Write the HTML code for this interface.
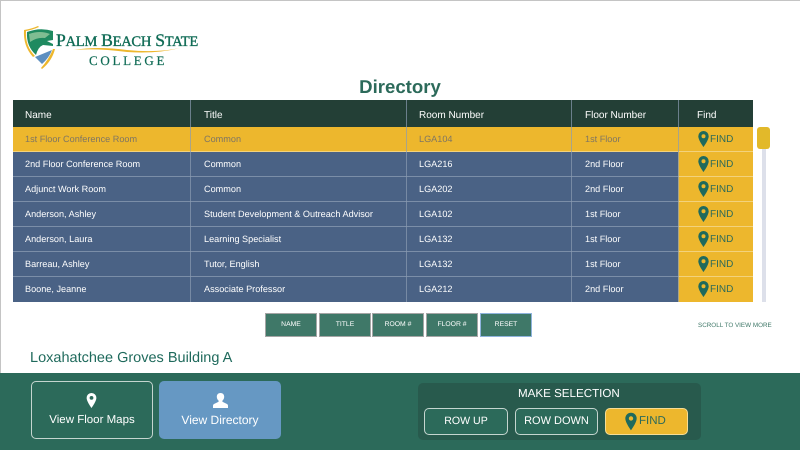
<!DOCTYPE html>
<html><head><meta charset="utf-8"><style>
*{box-sizing:border-box}
html,body{margin:0;padding:0}
body{width:800px;height:450px;position:relative;overflow:hidden;background:#fff;font-family:"Liberation Sans",sans-serif;text-rendering:geometricPrecision}
.a{position:absolute}
.t{position:absolute;white-space:nowrap}
.h{position:absolute;white-space:nowrap;top:100px;color:#fff;font-size:10px;line-height:31px}
.r{position:absolute;left:13px;width:665px;height:25px;background:#4a6285;border-bottom:1px solid #7b8ea8;color:#fff;font-size:9.15px;line-height:25px}
.r span{position:absolute;white-space:nowrap}
.c1{left:12px}.c2{left:191px}.c3{left:406px}.c4{left:572px}
.v{position:absolute;top:100px;width:1px;height:202px;background:#8a9bb0;opacity:.7}
.f{position:absolute;left:678px;width:75px;height:25px;background:#edb72d;border-bottom:1px solid #f3d27c;color:#2c6a5a;font-size:10px;line-height:25px}
.f svg{position:absolute;left:20px;top:4px}
.f span{position:absolute;left:32px;top:0}
.b{position:absolute;top:313px;height:24px;background:#3f7868;border:1px solid #a5a5a5;color:#fff;font-size:6.8px;line-height:22px;text-align:center}
.s{position:absolute;border:1px solid #c5d5cf;border-radius:5px;color:#fff;font-size:11.5px;text-align:center}
</style></head><body>
<div class="a" style="left:0;top:0;width:800px;height:1px;background:#c4c4c4"></div>
<div class="a" style="left:0;top:0;width:1px;height:373px;background:#c4c4c4"></div>

<svg class="a" style="left:22px;top:26px" width="34" height="44" viewBox="0 0 34 44">
<path d="M2 4 Q9 3 16 0 L17 1 Q10 4 4 5 Q3 20 13 30 L11 31 Q1 20 2 4Z" fill="#edb72d"/>
<path d="M5 6 Q18 1 31 5 L31 14 L25 15 L31 18 L31 20 L21 19 Q16 21 14 29 Q4 20 5 6Z" fill="#1f8a60"/>
<path d="M7 8 Q18 4 28 8 L23 12 Q15 11 8 16Z" fill="#7fbd92"/>
<path d="M13 31 L30 24 Q27 32 20 38 Z" fill="#5e8fc0"/>
<path d="M31 23 L33 23 Q30 35 20 43 L19 42 Q27 33 31 23Z" fill="#edb72d"/>
</svg>
<div class="t" style="left:56px;top:30px;font:17.6px/20px 'Liberation Serif',serif;color:#0f6b55;letter-spacing:-.3px;-webkit-text-stroke:.35px #0f6b55">P<span style="font-size:14.6px">ALM</span> B<span style="font-size:14.6px">EACH</span> S<span style="font-size:14.6px">TATE</span></div>
<svg class="a" style="left:72px;top:46px" width="110" height="8" viewBox="0 0 110 8"><path d="M2 4 Q25 0 55 4 Q85 7 108 2 Q85 8 55 6 Q25 2 2 4Z" fill="#edb72d"/></svg>
<div class="t" style="left:89px;top:52px;font:13px/17px 'Liberation Serif',serif;color:#0f6b55;letter-spacing:2.7px;-webkit-text-stroke:.2px #0f6b55">COLLEGE</div>

<div class="t" style="left:0;width:800px;top:75px;text-align:center;font:bold 18.6px/23px 'Liberation Sans',sans-serif;color:#2c6a5a">Directory</div>

<div class="a" style="left:13px;top:100px;width:740px;height:27px;background:#233f36"></div>
<div class="h" style="left:25px">Name</div>
<div class="h" style="left:204px">Title</div>
<div class="h" style="left:419px">Room Number</div>
<div class="h" style="left:585px">Floor Number</div>
<div class="h" style="left:697px">Find</div>

<div class="r" style="top:127px;background:#edb72d;border-color:#f3d27c;color:#7e7563"><span class="c1">1st Floor Conference Room</span><span class="c2">Common</span><span class="c3">LGA104</span><span class="c4">1st Floor</span></div>
<div class="r" style="top:152px"><span class="c1">2nd Floor Conference Room</span><span class="c2">Common</span><span class="c3">LGA216</span><span class="c4">2nd Floor</span></div>
<div class="r" style="top:177px"><span class="c1">Adjunct Work Room</span><span class="c2">Common</span><span class="c3">LGA202</span><span class="c4">2nd Floor</span></div>
<div class="r" style="top:202px"><span class="c1">Anderson, Ashley</span><span class="c2">Student Development &amp; Outreach Advisor</span><span class="c3">LGA102</span><span class="c4">1st Floor</span></div>
<div class="r" style="top:227px"><span class="c1">Anderson, Laura</span><span class="c2">Learning Specialist</span><span class="c3">LGA132</span><span class="c4">1st Floor</span></div>
<div class="r" style="top:252px"><span class="c1">Barreau, Ashley</span><span class="c2">Tutor, English</span><span class="c3">LGA132</span><span class="c4">1st Floor</span></div>
<div class="r" style="top:277px;border-bottom:0"><span class="c1">Boone, Jeanne</span><span class="c2">Associate Professor</span><span class="c3">LGA212</span><span class="c4">2nd Floor</span></div>

<div class="f" style="top:127px"><svg width="11" height="16" viewBox="0 0 11 16"><path fill-rule="evenodd" d="M5.5 0A5.2 5.2 0 0 0 .3 5.2C.3 9 5.5 16 5.5 16S10.7 9 10.7 5.2A5.2 5.2 0 0 0 5.5 0ZM5.5 3.2a2 2 0 1 1 0 4 2 2 0 0 1 0-4Z" fill="#1f6a5c"/></svg><span>FIND</span></div>
<div class="f" style="top:152px"><svg width="11" height="16" viewBox="0 0 11 16"><path fill-rule="evenodd" d="M5.5 0A5.2 5.2 0 0 0 .3 5.2C.3 9 5.5 16 5.5 16S10.7 9 10.7 5.2A5.2 5.2 0 0 0 5.5 0ZM5.5 3.2a2 2 0 1 1 0 4 2 2 0 0 1 0-4Z" fill="#1f6a5c"/></svg><span>FIND</span></div>
<div class="f" style="top:177px"><svg width="11" height="16" viewBox="0 0 11 16"><path fill-rule="evenodd" d="M5.5 0A5.2 5.2 0 0 0 .3 5.2C.3 9 5.5 16 5.5 16S10.7 9 10.7 5.2A5.2 5.2 0 0 0 5.5 0ZM5.5 3.2a2 2 0 1 1 0 4 2 2 0 0 1 0-4Z" fill="#1f6a5c"/></svg><span>FIND</span></div>
<div class="f" style="top:202px"><svg width="11" height="16" viewBox="0 0 11 16"><path fill-rule="evenodd" d="M5.5 0A5.2 5.2 0 0 0 .3 5.2C.3 9 5.5 16 5.5 16S10.7 9 10.7 5.2A5.2 5.2 0 0 0 5.5 0ZM5.5 3.2a2 2 0 1 1 0 4 2 2 0 0 1 0-4Z" fill="#1f6a5c"/></svg><span>FIND</span></div>
<div class="f" style="top:227px"><svg width="11" height="16" viewBox="0 0 11 16"><path fill-rule="evenodd" d="M5.5 0A5.2 5.2 0 0 0 .3 5.2C.3 9 5.5 16 5.5 16S10.7 9 10.7 5.2A5.2 5.2 0 0 0 5.5 0ZM5.5 3.2a2 2 0 1 1 0 4 2 2 0 0 1 0-4Z" fill="#1f6a5c"/></svg><span>FIND</span></div>
<div class="f" style="top:252px"><svg width="11" height="16" viewBox="0 0 11 16"><path fill-rule="evenodd" d="M5.5 0A5.2 5.2 0 0 0 .3 5.2C.3 9 5.5 16 5.5 16S10.7 9 10.7 5.2A5.2 5.2 0 0 0 5.5 0ZM5.5 3.2a2 2 0 1 1 0 4 2 2 0 0 1 0-4Z" fill="#1f6a5c"/></svg><span>FIND</span></div>
<div class="f" style="top:277px;border-bottom:0"><svg width="11" height="16" viewBox="0 0 11 16"><path fill-rule="evenodd" d="M5.5 0A5.2 5.2 0 0 0 .3 5.2C.3 9 5.5 16 5.5 16S10.7 9 10.7 5.2A5.2 5.2 0 0 0 5.5 0ZM5.5 3.2a2 2 0 1 1 0 4 2 2 0 0 1 0-4Z" fill="#1f6a5c"/></svg><span>FIND</span></div>

<div class="v" style="left:190px"></div>
<div class="v" style="left:406px"></div>
<div class="v" style="left:571px"></div>
<div class="v" style="left:678px"></div>

<div class="a" style="left:762px;top:145px;width:4px;height:157px;background:#dde0ea"></div>
<div class="a" style="left:757px;top:127px;width:13px;height:22px;background:#e2b92a;border-radius:3px"></div>

<div class="b" style="left:265px;width:52px">NAME</div>
<div class="b" style="left:319px;width:52px">TITLE</div>
<div class="b" style="left:372px;width:52px">ROOM #</div>
<div class="b" style="left:426px;width:52px">FLOOR #</div>
<div class="b" style="left:480px;width:52px;border:1px solid #8fb3dd">RESET</div>

<div class="t" style="left:698px;top:320px;font-size:6.3px;line-height:11px;color:#3f7868">SCROLL TO VIEW MORE</div>

<div class="t" style="left:30px;top:348px;font-size:14.5px;line-height:20px;color:#1f6a5c">Loxahatchee Groves Building A</div>

<div class="a" style="left:0;top:373px;width:800px;height:77px;background:#2c6a5a"></div>

<div class="s" style="left:31px;top:381px;width:122px;height:58px;background:#2c6a5a"></div>
<svg class="a" style="left:86px;top:393px" width="11" height="15" viewBox="0 0 11 16"><path fill-rule="evenodd" d="M5.5 0A5.2 5.2 0 0 0 .3 5.2C.3 9 5.5 16 5.5 16S10.7 9 10.7 5.2A5.2 5.2 0 0 0 5.5 0ZM5.5 3.2a2 2 0 1 1 0 4 2 2 0 0 1 0-4Z" fill="#fff"/></svg>
<div class="t" style="left:31px;width:122px;top:412px;text-align:center;color:#fff;font-size:11.5px;line-height:16px">View Floor Maps</div>

<div class="a" style="left:159px;top:381px;width:122px;height:58px;background:#6698c3;border-radius:5px"></div>
<svg class="a" style="left:213px;top:393px" width="15" height="15" viewBox="0 0 15 15"><path d="M7.5 0C5.2 0 3.800 1.500 3.800 3.800c0 1.600.7 3 1.800 3.800v1.100L1 11c-.7.4-1 1-1 1.700V15h15v-2.300c0-.7-.3-1.300-1-1.700L9.400 8.700V7.600c1.100-.8 1.800-2.200 1.800-3.800C11.200 1.500 9.800 0 7.500 0Z" fill="#fff"/></svg>
<div class="t" style="left:159px;width:122px;top:412px;text-align:center;color:#fff;font-size:12px;line-height:16px">View Directory</div>

<div class="a" style="left:418px;top:383px;width:283px;height:57px;background:#285a4d;border-radius:5px"></div>
<div class="t" style="left:518px;top:385px;color:#fff;font-size:11.6px;line-height:17px">MAKE SELECTION</div>
<div class="s" style="left:424px;top:408px;width:84px;height:27px;line-height:25px;background:#2c6a5a;font-size:10.6px">ROW UP</div>
<div class="s" style="left:515px;top:408px;width:83px;height:27px;line-height:24px;background:#2c6a5a;font-size:11px">ROW DOWN</div>
<div class="s" style="left:605px;top:408px;width:83px;height:27px;background:#edb72d;border-color:#f7dc94"></div>
<svg class="a" style="left:625px;top:412px" width="12" height="19" viewBox="0 0 11 16"><path fill-rule="evenodd" d="M5.5 0A5.200 5.200 0 0 0 .3 5.200C.3 9 5.500 16 5.500 16S10.700 9 10.700 5.200A5.200 5.200 0 0 0 5.500 0ZM5.500 3.200a2 2 0 1 1 0 4 2 2 0 0 1 0-4Z" fill="#1f6a5c"/></svg>
<div class="t" style="left:639px;top:413px;color:#2c6a5a;font-size:11.5px;line-height:17px">FIND</div>
</body></html>
